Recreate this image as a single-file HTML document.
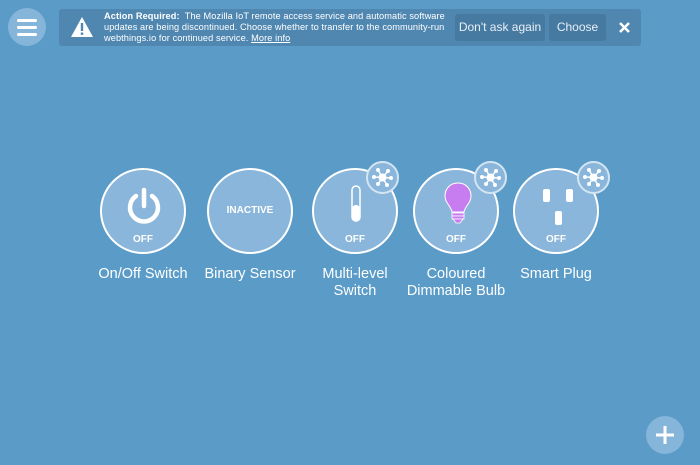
<!DOCTYPE html>
<html><head><style>
body{margin:0;width:700px;height:465px;background:#5a9bc8;font-family:"Liberation Sans",sans-serif;position:relative;overflow:hidden;color:#fff}
.menu{position:absolute;left:8px;top:8px;width:38px;height:38px;border-radius:50%;background:#86b5da}
.menu i{position:absolute;left:9px;width:20px;height:3px;background:#fff;border-radius:2px}
.banner{position:absolute;left:59px;top:9px;width:582px;height:37px;background:#4f87b1;border-radius:3px}
.msg{position:absolute;left:45px;top:2px;font-size:9.2px;line-height:10.8px;white-space:nowrap;letter-spacing:0.1px}
.btn{position:absolute;top:5px;height:27px;background:#467aa1;border-radius:3px;font-size:12px;line-height:27px;text-align:center;color:#e8f0f7}
.dev{position:absolute;width:86px;height:86px;border-radius:50%;border:2px solid #fff;background:#89b6da;box-sizing:border-box}
.st{position:absolute;left:0;right:0;top:64px;text-align:center;font-size:10px;font-weight:bold}
.lab{position:absolute;width:120px;text-align:center;font-size:14.5px;line-height:17px;color:#fff}
.badge{position:absolute;width:33px;height:33px;border-radius:50%;border:2px solid #d4e5f2;background:#89b6da;box-sizing:border-box}
</style></head><body>
<div class="menu"><i style="top:11px"></i><i style="top:18px"></i><i style="top:25px"></i></div>
<div class="banner">
<svg style="position:absolute;left:11px;top:7px" width="24" height="22" viewBox="0 0 24 22"><path d="M12 1L23 21H1Z" fill="#fff"/><rect x="10.8" y="7" width="2.4" height="8" fill="#4f87b1"/><rect x="10.8" y="16.5" width="2.4" height="2.4" fill="#4f87b1"/></svg>
<div class="msg"><b>Action Required:</b>&nbsp; The Mozilla IoT remote access service and automatic software<br>updates are being discontinued. Choose whether to transfer to the community-run<br>webthings.io for continued service. <u>More info</u></div>
<div class="btn" style="left:396px;width:90px">Don't ask again</div>
<div class="btn" style="left:490px;width:57px">Choose</div>
<svg style="position:absolute;left:559px;top:12px" width="13" height="13"><path d="M2 2L11 11M11 2L2 11" stroke="#fff" stroke-width="2.5"/></svg>
</div>

<div class="dev" style="left:100px;top:168px"><svg style="position:absolute;left:24px;top:16px" width="36" height="40" viewBox="0 0 36 40"><path d="M10 10A14 14 0 1 0 26 10" fill="none" stroke="#fff" stroke-width="4.5" stroke-linecap="round"/><line x1="18" y1="4" x2="18" y2="20" stroke="#fff" stroke-width="4.5" stroke-linecap="round"/></svg><div class="st">OFF</div></div>
<div class="dev" style="left:207px;top:168px"><div class="st" style="top:35px">INACTIVE</div></div>
<div class="dev" style="left:312px;top:168px"><svg style="position:absolute;left:36px;top:15px" width="12" height="38"><rect x="2" y="1" width="8" height="35" rx="4" fill="none" stroke="#fff" stroke-width="1.5"/><rect x="2" y="20" width="8" height="16" rx="4" fill="#fff"/></svg><div class="st">OFF</div></div>
<div class="dev" style="left:413px;top:168px"><svg style="position:absolute;left:28px;top:12px" width="30" height="44" viewBox="0 0 30 44"><path d="M15 1C7 1 2 7 2 14C2 21 8 24 9 30H21C22 24 28 21 28 14C28 7 23 1 15 1Z" fill="#c77df0" stroke="#fff" stroke-width="1"/><rect x="9" y="31" width="12" height="3" fill="#c77df0" stroke="#fff" stroke-width=".8"/><rect x="9" y="34" width="12" height="3" fill="#c77df0" stroke="#fff" stroke-width=".8"/><path d="M10 37H20L17 41H13Z" fill="#c77df0" stroke="#fff" stroke-width=".8"/></svg><div class="st">OFF</div></div>
<div class="dev" style="left:513px;top:168px"><svg style="position:absolute;left:25px;top:17px" width="36" height="40"><rect x="3" y="2" width="7" height="13" rx="2" fill="#fff"/><rect x="26" y="2" width="7" height="13" rx="2" fill="#fff"/><rect x="15" y="24" width="7" height="14" rx="2" fill="#fff"/></svg><div class="st">OFF</div></div>

<div class="badge" style="left:366px;top:161px"><svg width="29" height="29" viewBox="0 0 29 29"><g stroke="#fff" stroke-width="1.5"><line x1="14.5" y1="14.5" x2="10" y2="7"/><line x1="14.5" y1="14.5" x2="20" y2="8"/><line x1="14.5" y1="14.5" x2="23" y2="15"/><line x1="14.5" y1="14.5" x2="6" y2="14"/><line x1="14.5" y1="14.5" x2="19" y2="22"/><line x1="14.5" y1="14.5" x2="10" y2="21"/></g><g fill="#fff"><circle cx="14.5" cy="14.5" r="4"/><circle cx="10" cy="7" r="2"/><circle cx="20" cy="8" r="2"/><circle cx="23" cy="15" r="2"/><circle cx="6" cy="14" r="2"/><circle cx="19" cy="22" r="2"/><circle cx="10" cy="21" r="2"/></g></svg></div>
<div class="badge" style="left:474px;top:161px"><svg width="29" height="29" viewBox="0 0 29 29"><g stroke="#fff" stroke-width="1.5"><line x1="14.5" y1="14.5" x2="10" y2="7"/><line x1="14.5" y1="14.5" x2="20" y2="8"/><line x1="14.5" y1="14.5" x2="23" y2="15"/><line x1="14.5" y1="14.5" x2="6" y2="14"/><line x1="14.5" y1="14.5" x2="19" y2="22"/><line x1="14.5" y1="14.5" x2="10" y2="21"/></g><g fill="#fff"><circle cx="14.5" cy="14.5" r="4"/><circle cx="10" cy="7" r="2"/><circle cx="20" cy="8" r="2"/><circle cx="23" cy="15" r="2"/><circle cx="6" cy="14" r="2"/><circle cx="19" cy="22" r="2"/><circle cx="10" cy="21" r="2"/></g></svg></div>
<div class="badge" style="left:577px;top:161px"><svg width="29" height="29" viewBox="0 0 29 29"><g stroke="#fff" stroke-width="1.5"><line x1="14.5" y1="14.5" x2="10" y2="7"/><line x1="14.5" y1="14.5" x2="20" y2="8"/><line x1="14.5" y1="14.5" x2="23" y2="15"/><line x1="14.5" y1="14.5" x2="6" y2="14"/><line x1="14.5" y1="14.5" x2="19" y2="22"/><line x1="14.5" y1="14.5" x2="10" y2="21"/></g><g fill="#fff"><circle cx="14.5" cy="14.5" r="4"/><circle cx="10" cy="7" r="2"/><circle cx="20" cy="8" r="2"/><circle cx="23" cy="15" r="2"/><circle cx="6" cy="14" r="2"/><circle cx="19" cy="22" r="2"/><circle cx="10" cy="21" r="2"/></g></svg></div>

<div class="lab" style="left:83px;top:266px">On/Off Switch</div>
<div class="lab" style="left:190px;top:266px">Binary Sensor</div>
<div class="lab" style="left:295px;top:266px">Multi-level<br>Switch</div>
<div class="lab" style="left:396px;top:266px">Coloured<br>Dimmable Bulb</div>
<div class="lab" style="left:496px;top:266px">Smart Plug</div>

<div style="position:absolute;left:646px;top:416px;width:38px;height:38px;border-radius:50%;background:#86b5da"><svg width="38" height="38"><path d="M19 10V28M10 19H28" stroke="#fff" stroke-width="3"/></svg></div>
</body></html>
